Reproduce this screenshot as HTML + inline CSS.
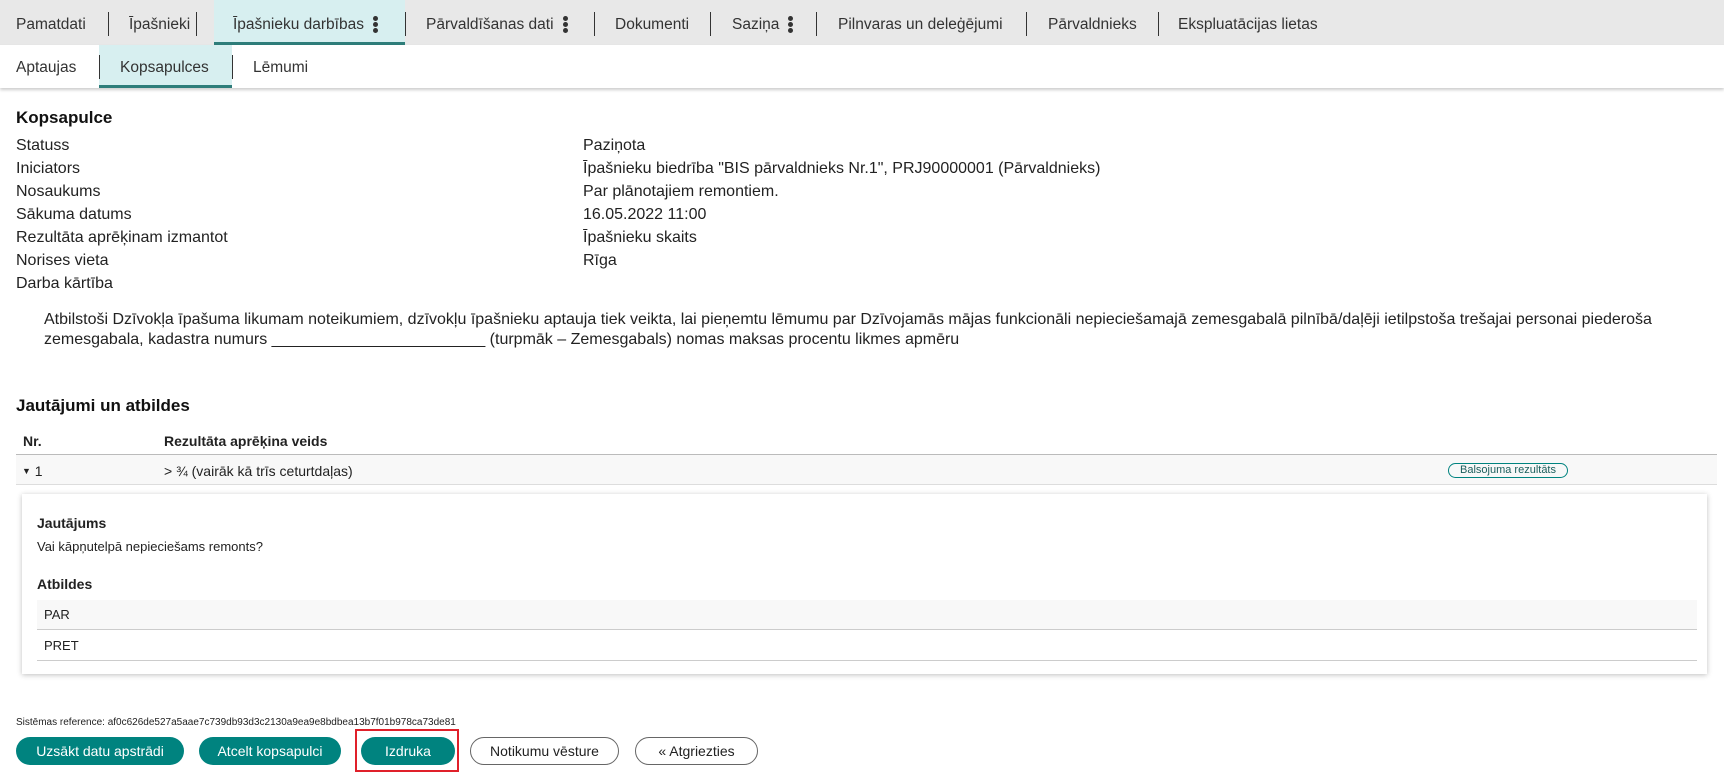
<!DOCTYPE html>
<html><head><meta charset="utf-8"><style>
*{box-sizing:border-box;margin:0;padding:0}
body{width:1724px;height:784px;background:#fff;font-family:"Liberation Sans",sans-serif;color:#222;position:relative;overflow:hidden}
.a{position:absolute;white-space:nowrap}
.nav1{position:absolute;left:0;top:0;width:1724px;height:45px;background:#e8e8e8;box-shadow:0 1px 3px rgba(0,0,0,.25)}
.nav2{position:absolute;left:0;top:45px;width:1724px;height:43px;background:#fff;box-shadow:0 2px 3px rgba(0,0,0,.2)}
.t{position:absolute;font-size:15.5px;color:#333;top:0;height:45px;padding-top:4px;display:flex;align-items:center;white-space:nowrap}
.nav2 .t{height:43px;padding-top:2px}
.sep{position:absolute;width:1px;background:#333;top:12px;height:24px}
.act{position:absolute;background:#d7eff0;border-bottom:3px solid #2e7d7a}
.dots{display:inline-block;width:5px;margin-left:9px}
.dots i{display:block;width:5px;height:5px;border-radius:3px;background:#333;margin:1px 0}
.l{font-size:16px;color:#222}
.h{font-size:17px;font-weight:bold;color:#111}
.btn{position:absolute;top:737px;height:28px;border-radius:14px;font-size:14px;text-align:center;line-height:28px}
.f{background:#00837f;color:#fff}
.o{border:1px solid #666;color:#222;line-height:26px;background:#fff}
</style></head><body>
<div class="nav1">
<div class="act" style="left:214px;width:191px;top:0;height:45px"></div>
<span class="t" style="left:16px">Pamatdati</span>
<div class="sep" style="left:108px"></div>
<span class="t" style="left:129px">Īpašnieki</span>
<div class="sep" style="left:196px"></div>
<span class="t" style="left:233px">Īpašnieku darbības<span class="dots"><i></i><i></i><i></i></span></span>
<span class="t" style="left:426px">Pārvaldīšanas dati<span class="dots"><i></i><i></i><i></i></span></span>
<div class="sep" style="left:405px"></div>
<div class="sep" style="left:594px"></div>
<span class="t" style="left:615px">Dokumenti</span>
<div class="sep" style="left:710px"></div>
<span class="t" style="left:732px">Saziņa<span class="dots"><i></i><i></i><i></i></span></span>
<div class="sep" style="left:816px"></div>
<span class="t" style="left:838px">Pilnvaras un deleģējumi</span>
<div class="sep" style="left:1026px"></div>
<span class="t" style="left:1048px">Pārvaldnieks</span>
<div class="sep" style="left:1158px"></div>
<span class="t" style="left:1178px">Ekspluatācijas lietas</span>
</div>
<div class="nav2">
<div class="act" style="left:99px;width:133px;top:0;height:43px"></div>
<span class="t" style="left:16px">Aptaujas</span>
<div class="sep" style="left:99px;top:10px"></div>
<span class="t" style="left:120px">Kopsapulces</span>
<div class="sep" style="left:232px;top:10px"></div>
<span class="t" style="left:253px">Lēmumi</span>
</div>

<div class="a h" style="left:16px;top:108px">Kopsapulce</div>
<div class="a l" style="left:16px;top:137px">Statuss</div><div class="a l" style="left:583px;top:137px">Paziņota</div>
<div class="a l" style="left:16px;top:160px">Iniciators</div><div class="a l" style="left:583px;top:160px">Īpašnieku biedrība "BIS pārvaldnieks Nr.1", PRJ90000001 (Pārvaldnieks)</div>
<div class="a l" style="left:16px;top:183px">Nosaukums</div><div class="a l" style="left:583px;top:183px">Par plānotajiem remontiem.</div>
<div class="a l" style="left:16px;top:206px">Sākuma datums</div><div class="a l" style="left:583px;top:206px">16.05.2022 11:00</div>
<div class="a l" style="left:16px;top:229px">Rezultāta aprēķinam izmantot</div><div class="a l" style="left:583px;top:229px">Īpašnieku skaits</div>
<div class="a l" style="left:16px;top:252px">Norises vieta</div><div class="a l" style="left:583px;top:252px">Rīga</div>
<div class="a l" style="left:16px;top:275px">Darba kārtība</div>
<div class="a l" style="left:44px;top:311px">Atbilstoši Dzīvokļa īpašuma likumam noteikumiem, dzīvokļu īpašnieku aptauja tiek veikta, lai pieņemtu lēmumu par Dzīvojamās mājas funkcionāli nepieciešamajā zemesgabalā pilnībā/daļēji ietilpstoša trešajai personai piederoša</div>
<div class="a l" style="left:44px;top:331px">zemesgabala, kadastra numurs ________________________ (turpmāk – Zemesgabals) nomas maksas procentu likmes apmēru</div>

<div class="a h" style="left:16px;top:396px">Jautājumi un atbildes</div>
<div class="a" style="left:23px;top:433px;font-size:14px;font-weight:bold">Nr.</div>
<div class="a" style="left:164px;top:433px;font-size:14px;font-weight:bold">Rezultāta aprēķina veids</div>
<div class="a" style="left:16px;top:454px;width:1701px;height:31px;background:#f8f8f8;border-top:1px solid #bbb;border-bottom:1px solid #ddd"></div>
<div class="a" style="left:22px;top:463px;font-size:14px"><span style="font-size:9px;vertical-align:2px">▼</span> 1</div>
<div class="a" style="left:164px;top:463px;font-size:14px">&gt; ¾ (vairāk kā trīs ceturtdaļas)</div>
<div class="a" style="left:1448px;top:463px;width:120px;height:15px;border:1px solid #00837f;border-radius:8px;font-size:11px;color:#1a5e5c;text-align:center;line-height:13px">Balsojuma rezultāts</div>

<div class="a" style="left:22px;top:494px;width:1685px;height:180px;background:#fff;box-shadow:0 1px 5px rgba(0,0,0,.25)"></div>
<div class="a" style="left:37px;top:515px;font-size:14px;font-weight:bold">Jautājums</div>
<div class="a" style="left:37px;top:539px;font-size:13px">Vai kāpņutelpā nepieciešams remonts?</div>
<div class="a" style="left:37px;top:576px;font-size:14px;font-weight:bold">Atbildes</div>
<div class="a" style="left:37px;top:600px;width:1660px;height:30px;background:#f8f8f8;border-bottom:1px solid #ccc"></div>
<div class="a" style="left:44px;top:607px;font-size:13px">PAR</div>
<div class="a" style="left:44px;top:638px;font-size:13px">PRET</div>
<div class="a" style="left:37px;top:660px;width:1660px;height:1px;background:#ccc"></div>

<div class="a" style="left:16px;top:717px;font-size:10px;color:#222">Sistēmas reference: af0c626de527a5aae7c739db93d3c2130a9ea9e8bdbea13b7f01b978ca73de81</div>
<div class="btn f" style="left:16px;width:168px">Uzsākt datu apstrādi</div>
<div class="btn f" style="left:199px;width:142px">Atcelt kopsapulci</div>
<div class="a" style="left:355px;top:729px;width:104px;height:43px;border:2px solid #e0202a"></div>
<div class="btn f" style="left:361px;width:94px">Izdruka</div>
<div class="btn o" style="left:470px;width:149px">Notikumu vēsture</div>
<div class="btn o" style="left:635px;width:123px">« Atgriezties</div>
</body></html>
